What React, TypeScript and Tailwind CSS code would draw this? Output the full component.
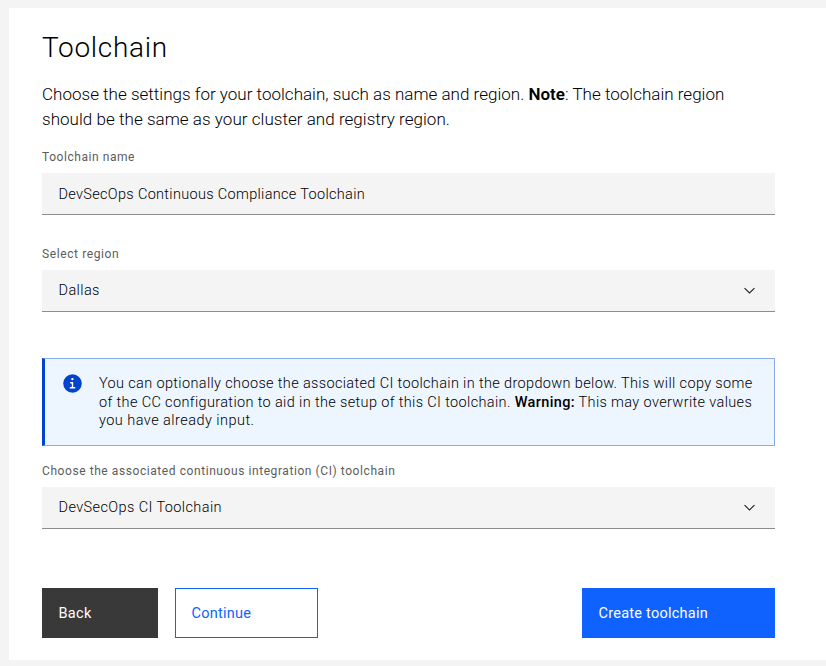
import type { ReactNode } from "react";

function Chevron() {
  return (
    <svg width="17" height="17" viewBox="0 0 16 16" fill="#161616" aria-hidden="true">
      <path d="M8 11 3 6l.7-.7L8 9.6l4.3-4.3.7.7z" />
    </svg>
  );
}

function Label({ children, className }: { children: ReactNode; className: string }) {
  return (
    <div className={`h-4 whitespace-nowrap text-[12px] leading-4 font-normal text-[#5c5c5c] ${className}`}>{children}</div>
  );
}

function Field({ children, chevron, className }: { children: ReactNode; chevron?: boolean; className: string }) {
  return (
    <div className="mt-2 flex h-[42px] items-center justify-between border-b border-[#8d8d8d] bg-[#f4f4f4] pr-[17px] pl-[16.5px]">
      <span className={`whitespace-nowrap text-[14.5px] leading-5 ${className}`}>{children}</span>
      {chevron && <Chevron />}
    </div>
  );
}

export default function App() {
  return (
    <div className="h-[666px] w-[826px] overflow-hidden bg-[#f4f4f4] pt-2 pl-[9px] font-['Roboto',sans-serif] font-light text-black">
      <main className="flex h-[652px] flex-col bg-white pt-[21px] pr-[51px] pl-[33px]">
        <h1 className="h-[38px] leading-[38px] text-[28px] font-light tracking-[0.7px]">Toolchain</h1>
        <div className="mt-[15px] h-[50px] text-[17px] leading-[25px] whitespace-nowrap">
          <p className="tracking-[0.015px]">
            Choose the settings for your toolchain, such as name and region.{" "}
            <strong className="font-semibold">Note</strong>: The toolchain region
          </p>
          <p className="tracking-[0.04px]">should be the same as your cluster and registry region.</p>
        </div>

        <div className="mt-[17px]">
          <Label className="tracking-[0.56px]">Toolchain name</Label>
          <Field className="pt-0.5 tracking-[0.32px]">DevSecOps Continuous Compliance Toolchain</Field>
        </div>

        <div className="mt-[31px]">
          <Label className="tracking-[0.6px]">Select region</Label>
          <Field chevron className="tracking-[0.4px]">Dallas</Field>
        </div>

        <div className="mt-[46px] flex h-[88px] border border-l-3 border-[#8aaaee] border-l-[#0043ce] bg-[#edf5ff] pt-[15px] pl-[18px]">
          <svg className="shrink-0" width="19" height="19" viewBox="0 0 19 19" aria-hidden="true">
            <circle cx="9.5" cy="9.5" r="9.3" fill="#0043ce" />
            <circle cx="9.4" cy="5.1" r="1.2" fill="#fff" />
            <path d="M7.2 8h3v5h2v1.4H6.8V13h2V9.4H7.2z" fill="#fff" />
          </svg>
          <div className="mt-px ml-[17px] text-[14.5px] leading-[18.6px] whitespace-nowrap">
            <p className="tracking-[0.355px]">
              You can optionally choose the associated CI toolchain in the dropdown below. This will copy some
            </p>
            <p className="tracking-[0.36px]">
              of the CC configuration to aid in the setup of this CI toolchain.{" "}
              <strong className="font-medium">Warning:</strong> This may overwrite values
            </p>
            <p className="tracking-[0.46px]">you have already input.</p>
          </div>
        </div>

        <div className="mt-[17px]">
          <Label className="tracking-[0.575px]">Choose the associated continuous integration (CI) toolchain</Label>
          <Field chevron className="tracking-[0.4px]">DevSecOps CI Toolchain</Field>
        </div>

        <div className="mt-[59px] flex h-[50px] text-[14.5px] whitespace-nowrap">
          <button className="w-[116px] bg-[#393939] pt-px pl-[16.5px] text-left font-normal tracking-[0.3px] text-white">Back</button>
          <button className="ml-[17px] w-[143px] border border-[#0f62fe] pt-px pl-[15.5px] text-left font-normal tracking-[0.25px] text-[#0f62fe]">
            Continue
          </button>
          <button className="ml-auto w-[193px] bg-[#0f62fe] pt-px pl-[16.5px] text-left font-normal tracking-[0.25px] text-white">
            Create toolchain
          </button>
        </div>
      </main>
    </div>
  );
}
